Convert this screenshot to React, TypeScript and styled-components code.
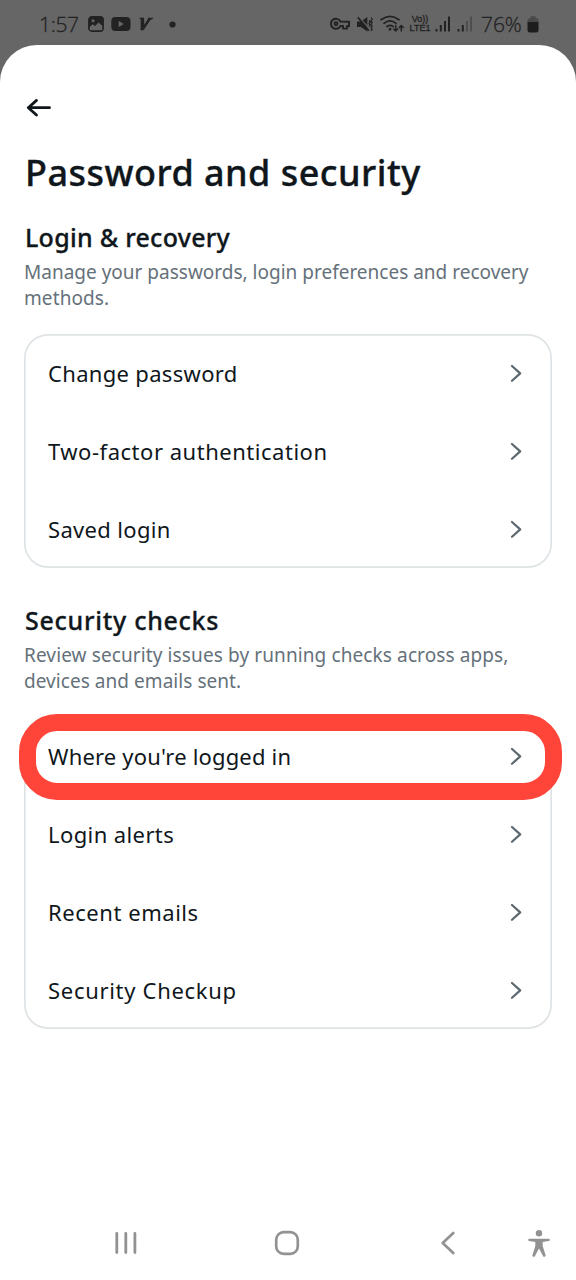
import React from "react";
import styled, { createGlobalStyle } from "styled-components";

const GlobalStyle = createGlobalStyle`
  * { box-sizing: border-box; }
  body {
    margin: 0;
    background: #666666;
    font-family: "Noto Sans", sans-serif;
    color: #10171c;
  }
`;

const Screen = styled.div`
  display: flex;
  flex-direction: column;
  width: 576px;
  height: 1280px;
  overflow: hidden;
  background: #666666;
`;

const StatusBar = styled.header`
  display: flex;
  align-items: center;
  flex: none;
  height: 45px;
  padding: 3px 37px 0 39px;
  color: #222222;
`;

const StatusText = styled.span<{ $width: number; $spacing: number; $gap?: number }>`
  width: ${(p) => p.$width}px;
  flex: none;
  margin-left: ${(p) => p.$gap ?? 0}px;
  font: 300 21px/28px "Open Sans", sans-serif;
  -webkit-text-stroke: 0.3px #222222;
  letter-spacing: ${(p) => p.$spacing}px;
  white-space: nowrap;
`;

const StatusIcon = styled.svg<{ $gap: number }>`
  display: block;
  flex: none;
  margin-left: ${(p) => p.$gap}px;
`;

const Spacer = styled.div`
  flex: 1;
`;

const Network = styled.div`
  display: flex;
  flex-direction: column;
  flex: none;
  align-items: center;
  width: 22px;
  margin-left: 4px;
  font: 600 9px/9px "Liberation Sans", sans-serif;
  font-weight: 400;
  -webkit-text-stroke: 0.3px #222222;
  white-space: nowrap;
`;

const Sheet = styled.main`
  display: flex;
  flex: 1;
  flex-direction: column;
  background: #ffffff;
  border-radius: 37px 37px 0 0;
`;

const Content = styled.div`
  flex: 1;
  padding: 51px 24px 0;
`;

const BackButton = styled.button`
  display: block;
  width: 28px;
  height: 24px;
  padding: 0;
  border: 0;
  background: none;
`;

const Title = styled.h1`
  margin: 29px 0 0 1px;
  font-size: 36px;
  font-weight: 500;
  -webkit-text-stroke: 0.35px #10171c;
  line-height: 48px;
  letter-spacing: 0.47px;
  white-space: nowrap;
`;

const Section = styled.section<{ $top: number }>`
  margin-top: ${(p) => p.$top}px;
`;

const SectionTitle = styled.h2<{ $spacing: number }>`
  margin: 0 0 0 1px;
  font-size: 25px;
  font-weight: 500;
  -webkit-text-stroke: 0.3px #10171c;
  line-height: 34px;
  letter-spacing: ${(p) => p.$spacing}px;
  white-space: nowrap;
`;

const Description = styled.p`
  margin: 6px 0 23px;
  color: #65717a;
  font-size: 19px;
  line-height: 25.5px;
`;

const Line = styled.span<{ $spacing: number }>`
  display: block;
  letter-spacing: ${(p) => p.$spacing}px;
  white-space: nowrap;
`;

const Card = styled.div`
  border-radius: 24px;
  box-shadow: inset 0 0 0 1.7px #dfe3e5;
`;

const Row = styled.div`
  position: relative;
  display: flex;
  align-items: center;
  justify-content: space-between;
  height: 78px;
  padding: 0 30px 0 24px;
`;

const RowLabel = styled.span<{ $spacing: number }>`
  font-size: 22px;
  line-height: 30px;
  letter-spacing: ${(p) => p.$spacing}px;
  white-space: nowrap;
`;

const RowChevron = styled.svg`
  display: block;
`;

const Highlight = styled.div`
  position: absolute;
  top: -3px;
  left: -5.5px;
  width: 543.5px;
  height: 86px;
  border: 17.5px solid #ff453a;
  border-radius: 38px;
`;

const NavBar = styled.nav`
  display: flex;
  align-items: center;
  flex: none;
  height: 73px;
  padding: 0 26px 1px 114px;
`;

const NavIcon = styled.svg<{ $gap: number }>`
  display: block;
  flex: none;
  margin-left: ${(p) => p.$gap}px;
`;

const Chevron = () => (
  <RowChevron width="12" height="18" viewBox="0 0 12 18" fill="none" stroke="#5c6870" strokeWidth="2.2" strokeLinecap="round" strokeLinejoin="round">
    <path d="M2 2 10.200 9.400 2 16.800" />
  </RowChevron>
);

type Item = { label: string; spacing: number; highlighted?: boolean };

const loginItems: Item[] = [
  { label: "Change password", spacing: 0.32 },
  { label: "Two-factor authentication", spacing: 0.52 },
  { label: "Saved login", spacing: 0.33 },
];

const checkItems: Item[] = [
  { label: "Where you're logged in", spacing: 0.17, highlighted: true },
  { label: "Login alerts", spacing: 0.4 },
  { label: "Recent emails", spacing: 0.55 },
  { label: "Security Checkup", spacing: 0.7 },
];

const ItemCard = ({ items }: { items: Item[] }) => (
  <Card>
    {items.map((item) => (
      <Row key={item.label}>
        <RowLabel $spacing={item.spacing}>{item.label}</RowLabel>
        <Chevron />
        {item.highlighted && <Highlight />}
      </Row>
    ))}
  </Card>
);

export default function App() {
  return (
    <Screen>
      <GlobalStyle />
      <StatusBar>
        <StatusText $width={41} $spacing={-0.3}>1:57</StatusText>
        <StatusIcon $gap={8} width="16" height="16" viewBox="0 0 16 16">
          <rect x="0.8" y="0.8" width="14.4" height="14.4" rx="3" fill="#222" stroke="#222" strokeWidth="1.4" />
          <circle cx="5" cy="4.8" r="1.5" fill="#666" />
          <path d="M1.8 10.8 4.7 8.2 7 10.1l3.5-3.5 3.8 3.2v3.5q0 1-1 1H2.8q-1 0-1-1Z" fill="#666" />
        </StatusIcon>
        <StatusIcon $gap={7} width="20" height="16" viewBox="0 0 20 16">
          <rect x="0.3" y="1" width="19.2" height="14" rx="4" fill="#222" />
          <path d="m7.7 5 5.2 3-5.2 3Z" fill="#666" />
        </StatusIcon>
        <StatusIcon $gap={8} width="15" height="14" viewBox="0 0 15 14" fill="#222">
          <path d="M0 .8h5L5.300 7.800 9.300 1.600 8.500.8h6L12.900 2.500H11.700L4.500 13.300H1.600L1.700 2.500Z" />
        </StatusIcon>
        <StatusIcon $gap={15} width="7" height="7" viewBox="0 0 7 7">
          <circle cx="3.5" cy="3.5" r="3.1" fill="#222" />
        </StatusIcon>
        <Spacer />
        <StatusIcon $gap={0} width="20" height="14" viewBox="0 0 20 14" fill="none" stroke="#222" strokeWidth="1.9" strokeLinejoin="round">
          <path d="M10.400 4.500A5 5 0 1 0 10.400 9h2.700v2.600h4V9h2V4.700Z" />
          <circle cx="6" cy="6.800" r="1.500" />
        </StatusIcon>
        <StatusIcon $gap={7} width="17" height="17" viewBox="0 0 17 17">
          <path d="M0 5.400h4L10.300 1v14.500L4 11H0Z" fill="#222" />
          <path d="m2 1 11.500 13" stroke="#666" strokeWidth="1.200" />
          <path d="m.8 1.200 11 13.500" stroke="#222" strokeWidth="1.800" />
          <path d="m12 4.500 1.300 1.500L12 7.500 13.300 9 12 10.500M14 1.500l1.200 1.700L14 4.900l1.200 1.700L14 8.300l1.200 1.700-1.200 1.700 1.200 1.700-1.200 1.500" fill="none" stroke="#222" strokeWidth="1.200" />
        </StatusIcon>
        <StatusIcon $gap={6} width="25" height="18" viewBox="0 0 25 18" fill="none" stroke="#222" strokeWidth="1.700" strokeLinecap="round" strokeLinejoin="round">
          <path d="M1 4.700Q10-2 19 4.700M4 8.300q6-4.700 12 0M7 11.500q3-2.200 6 0" />
          <circle cx="10" cy="14.300" r="0.600" fill="#222" />
          <path d="M15.700 10.500V16m-2-2 2 2 2-2M21.300 16v-5.500m-2 2 2-2 2 2" strokeWidth="1.500" />
        </StatusIcon>
        <Network>
          <span>Vo))</span>
          <span>LTE1</span>
        </Network>
        <StatusIcon $gap={4} width="16" height="16" viewBox="0 0 16 16" fill="#222">
          <path d="M.5 13h2v2.500h-2zM4.800 9h2v6.500h-2zM9 5h2v10.500H9zM13 .5h2v15h-2z" />
        </StatusIcon>
        <StatusIcon $gap={6} width="16" height="16" viewBox="0 0 16 16" fill="#222">
          <path d="M.5 13h2v2.500h-2zM4.800 9h2v6.500h-2z" />
          <path d="M9 5h2v10.500H9zM13 .5h2v15h-2z" opacity="0.350" />
        </StatusIcon>
        <StatusText $gap={8} $width={43} $spacing={-0.1}>76%</StatusText>
        <StatusIcon $gap={3} width="12" height="17" viewBox="0 0 12 17">
          <path d="M3.500 2V.7q0-.5.5-.5h4q.5 0 .5.5V2q3 0 3 3v2H.500V5q0-3 3-3Z" fill="#494949" />
          <path d="M.5 6h11v8q0 2.500-2.500 2.500H3Q.5 16.500 .5 14Z" fill="#1d1d1d" />
        </StatusIcon>
      </StatusBar>

      <Sheet>
        <Content>
          <BackButton aria-label="Back">
            <svg width="28" height="24" viewBox="0 0 28 24" fill="none" stroke="#10171c" strokeWidth="2.800" strokeLinecap="round" strokeLinejoin="round">
              <path d="M4.300 11.700H25.500M12.500 4.400 4.300 11.700l8.200 7.300" />
            </svg>
          </BackButton>
          <Title>Password and security</Title>

          <Section $top={23}>
            <SectionTitle $spacing={0.27}>Login &amp; recovery</SectionTitle>
            <Description>
              <Line $spacing={0}>Manage your passwords, login preferences and recovery</Line>
              <Line $spacing={0.1}>methods.</Line>
            </Description>
            <ItemCard items={loginItems} />
          </Section>

          <Section $top={35}>
            <SectionTitle $spacing={0.72}>Security checks</SectionTitle>
            <Description>
              <Line $spacing={0.11}>Review security issues by running checks across apps,</Line>
              <Line $spacing={0.05}>devices and emails sent.</Line>
            </Description>
            <ItemCard items={checkItems} />
          </Section>
        </Content>

        <NavBar>
          <NavIcon $gap={0} width="24" height="24" viewBox="0 0 24 24" stroke="#929292" strokeWidth="2.800" strokeLinecap="round">
            <path d="M2.800 2.500v19M11.800 2.500v19M20.900 2.500v19" />
          </NavIcon>
          <NavIcon $gap={136} width="26" height="26" viewBox="0 0 26 26" fill="none" stroke="#929292" strokeWidth="2.700">
            <rect x="2.200" y="2.200" width="21.600" height="21.600" rx="7.500" />
          </NavIcon>
          <NavIcon $gap={140} width="16" height="24" viewBox="0 0 16 24" fill="none" stroke="#929292" strokeWidth="2.700" strokeLinecap="round" strokeLinejoin="round">
            <path d="M13.300 2 2.700 12l10.600 10" />
          </NavIcon>
          <Spacer />
          <NavIcon $gap={0} width="22" height="28" viewBox="0 0 22 28" fill="#929292">
            <circle cx="11" cy="4.200" r="3.200" />
            <path d="M1.300 9.800h19.400a1 1 0 0 1 0 2.200L14.700 13v4l2.800 9a1.250 1.250 0 0 1-2.500.9L11.300 20h-.6L7 26.900a1.250 1.250 0 0 1-2.500-.9L7.300 17v-4L1.300 12a1 1 0 0 1 0-2.200Z" />
          </NavIcon>
        </NavBar>
      </Sheet>
    </Screen>
  );
}
